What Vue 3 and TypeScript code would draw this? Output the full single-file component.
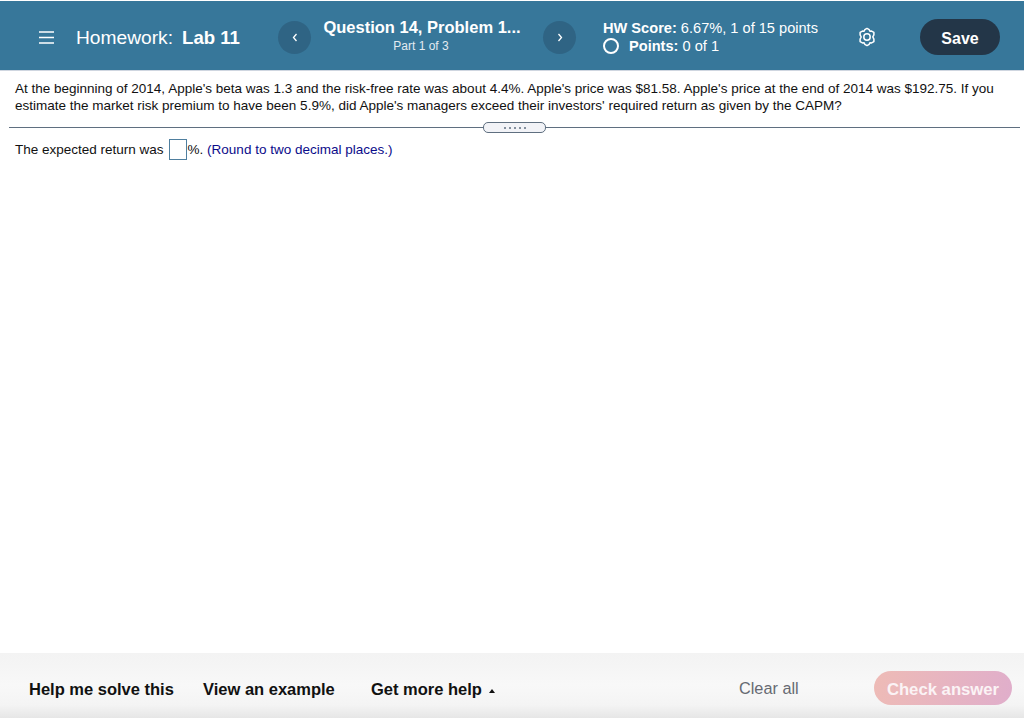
<script setup lang="ts">
const dots: number[] = [1, 2, 3, 4, 5];
</script>

<template>
  <div class="page">
    <header class="head">
      <svg class="menu" width="15" height="13" viewBox="0 0 15 13">
        <path d="M0 1H15M0 6.5H15M0 12H15" stroke="#fff" stroke-width="1.3" fill="none" />
      </svg>
      <div class="hw">Homework:<b class="lab">Lab 11</b></div>
      <button class="circle">
        <svg width="6" height="9" viewBox="0 0 6 9"><path d="M4.5 1L1.5 4.5L4.5 8" stroke="#fff" stroke-width="1.3" fill="none" /></svg>
      </button>
      <div class="title">
        <div class="q">Question 14, Problem 1...</div>
        <div class="part">Part 1 of 3</div>
      </div>
      <button class="circle">
        <svg width="6" height="9" viewBox="0 0 6 9"><path d="M1.5 1L4.5 4.5L1.5 8" stroke="#fff" stroke-width="1.3" fill="none" /></svg>
      </button>
      <div class="score">
        <div class="s1"><b>HW Score:</b> 6.67%, 1 of 15 points</div>
        <div class="s2"><span class="ring"></span><span><b>Points:</b> 0 of 1</span></div>
      </div>
      <svg class="gear" width="20" height="20" viewBox="0 0 20 20" fill="none" stroke="#fff" stroke-width="1.5" stroke-linejoin="round">
        <path d="M10 1.4L12.2 2.7L12.9 4.3L14.6 4.1L16.9 5.4L16.9 7.9L15.8 9.9L16.9 12.1L16.9 14.6L14.6 15.9L12.9 15.7L12.2 17.3L10 18.6L7.8 17.3L7.1 15.7L5.4 15.9L3.1 14.6L3.1 12.1L4.2 10L3.1 7.9L3.1 5.4L5.4 4.1L7.1 4.3L7.8 2.7Z" />
        <circle cx="10" cy="10" r="3.2" />
      </svg>
      <button class="save">Save</button>
    </header>

    <main class="main">
      <p class="prompt">At the beginning of 2014, Apple's beta was 1.3 and the risk-free rate was about 4.4%. Apple's price was $81.58. Apple's price at the end of 2014 was $192.75. If you<br />estimate the market risk premium to have been 5.9%, did Apple's managers exceed their investors' required return as given by the CAPM?</p>
      <div class="divider">
        <span class="line"></span>
        <span class="handle"><i v-for="d in dots" :key="d" class="dot"></i></span>
        <span class="line"></span>
      </div>
      <div class="answer">
        <span>The expected return was</span>
        <span class="box"></span>
        <span>%. <span class="hint">(Round to two decimal places.)</span></span>
      </div>
    </main>

    <footer class="foot">
      <a class="l1">Help me solve this</a>
      <a class="l2">View an example</a>
      <a class="l3">Get more help <span class="caret"></span></a>
      <span class="clear">Clear all</span>
      <button class="check">Check answer</button>
    </footer>
  </div>
</template>

<style>
html, body { margin: 0; background: #fff; }
</style>

<style scoped>
.page {
  width: 1024px;
  height: 718px;
  display: flex;
  flex-direction: column;
  overflow: hidden;
  font-family: "Liberation Sans", Arial, sans-serif;
  color: #111;
}
.head {
  height: 70px;
  margin-top: 1px;
  flex: none;
  box-sizing: border-box;
  padding-top: 3px;
  border-bottom: 1px solid #cfd6e0;
  background: #37779a;
  color: #fff;
  display: flex;
  align-items: center;
  padding-left: 39px;
}
.menu { flex: none; }
.hw { margin-left: 22px; width: 202px; font-size: 19.2px; white-space: nowrap; margin-top: 1px; }
.lab { margin-left: 9px; font-size: 18.6px; }
.circle {
  width: 33px;
  height: 33px;
  flex: none;
  padding: 0;
  border: 0;
  border-radius: 50%;
  background: #2f6484;
  display: flex;
  align-items: center;
  justify-content: center;
}
.title { width: 232px; margin-left: -5px; margin-right: 5px; text-align: center; }
.q { font-size: 16.5px; font-weight: 700; line-height: 20px; white-space: nowrap; margin-top: -4px; }
.part { font-size: 12px; line-height: 16px; margin-top: 1px; margin-right: 2px; color: #e3ebf1; }
.score { margin-left: 27px; width: 254px; font-size: 14.6px; line-height: 18px; margin-top: -1px; }
.s1 { white-space: nowrap; }
.s2 { display: flex; align-items: center; gap: 10px; white-space: nowrap; }
.ring {
  width: 16px;
  height: 16px;
  box-sizing: border-box;
  border: 2px solid #fff;
  border-radius: 50%;
  flex: none;
}
.gear { flex: none; margin-left: 0; }
.save {
  margin-left: 43px;
  width: 80px;
  height: 36px;
  flex: none;
  padding: 3px 0 0;
  border: 0;
  border-radius: 18px;
  background: #233648;
  color: #fff;
  font: 700 16px "Liberation Sans", Arial, sans-serif;
}
.main { flex: 1; min-height: 0; }
.prompt {
  margin: 9px 0 0;
  padding-left: 15px;
  font-size: 13.5px;
  line-height: 17px;
  white-space: nowrap;
}
.divider {
  margin: 8px 4px 0 9px;
  height: 11px;
  display: flex;
  align-items: center;
}
.line { flex: 1; height: 1px; background: #5f6f80; }
.handle {
  width: 63px;
  height: 11px;
  box-sizing: border-box;
  border: 1px solid #5f6f80;
  border-radius: 5px;
  background: #f2f3f7;
  display: flex;
  align-items: center;
  justify-content: center;
  gap: 3px;
}
.dot { width: 2px; height: 2px; background: #5f6f80; border-radius: 50%; }
.answer {
  margin-top: 5px;
  padding-left: 15px;
  display: flex;
  align-items: center;
  font-size: 13.5px;
  height: 22px;
  white-space: pre;
}
.box {
  width: 18px;
  height: 21px;
  box-sizing: border-box;
  margin: 0 1px 0 5px;
  border: 1px solid #4f7f9f;
  background: #fff;
}
.hint { color: #0b0b8a; }
.foot {
  height: 65px;
  flex: none;
  box-sizing: border-box;
  padding-top: 25px;
  background: linear-gradient(to bottom, #f3f3f3 0%, #f8f8f8 50%, #f4f4f4 80%, #e6e6e6 100%);
  display: flex;
  align-items: flex-start;
  font-size: 16.5px;
  font-weight: 700;
  white-space: nowrap;
  line-height: 22px;
}
.l1 { margin-left: 29px; width: 174px; }
.l2 { width: 168px; }
.l3 { width: 368px; }
.caret {
  display: inline-block;
  width: 0;
  height: 0;
  margin-left: 2px;
  vertical-align: 2px;
  border-left: 3.5px solid transparent;
  border-right: 3.5px solid transparent;
  border-bottom: 4px solid #111;
}
.clear { width: 135px; margin-top: -1px; font-size: 16.3px; font-weight: 400; color: #666a72; }
.check {
  width: 138px;
  height: 34px;
  margin-top: -7px;
  flex: none;
  padding: 3px 0 0;
  border: 0;
  border-radius: 17px;
  background: linear-gradient(100deg, #eebbb6, #e0aecb);
  color: #fbf3f5;
  font: 700 16.7px "Liberation Sans", Arial, sans-serif;
}
</style>
